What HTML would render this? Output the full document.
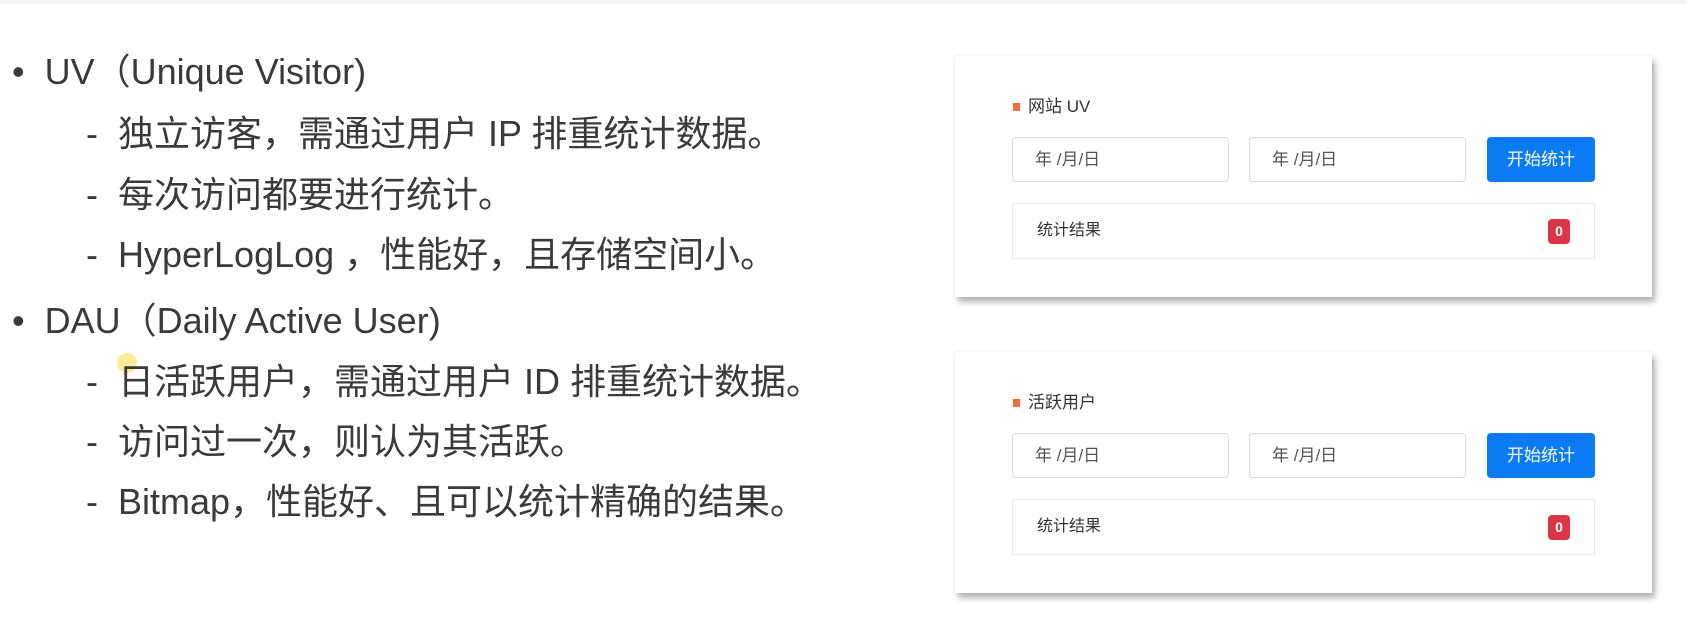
<!DOCTYPE html>
<html><head><meta charset="utf-8"><style>
body{margin:0;width:1687px;height:622px;background:#fff;position:relative;overflow:hidden;font-family:"Liberation Sans","Noto Sans CJK SC",sans-serif;color:#3a3a3a}
.l{position:absolute;font-size:36px;line-height:44px;white-space:nowrap}
.card{position:absolute;left:955px;width:697px;height:241px;background:#fff;box-shadow:3px 5px 6px rgba(0,0,0,.3),0 0 3px rgba(0,0,0,.08)}
.t{position:absolute;left:73px;top:39px;font-size:17px;line-height:24px;color:#333}
.t:before{content:"";position:absolute;left:-15px;top:8px;width:7px;height:8px;background:#f26a3d}
.in{position:absolute;top:81px;width:217px;height:45px;border:1px solid #dcdcdc;border-radius:4px;box-sizing:border-box;font-size:17px;line-height:43px;padding-left:22px;color:#555}
.btn{position:absolute;left:532px;top:81px;width:108px;height:45px;background:#0a7bf5;border-radius:4px;color:#fff;font-size:17px;line-height:45px;text-align:center}
.res{position:absolute;left:57px;top:147px;width:583px;height:56px;border:1px solid #e8e8e8;box-sizing:border-box;font-size:16px;line-height:54px;padding-left:24px;color:#333}
.b{position:absolute;right:24px;top:15px;width:22px;height:25px;background:#dc3545;border-radius:4px;color:#fff;font-size:14px;font-weight:bold;line-height:25px;text-align:center}
</style></head><body>
<div style="position:absolute;left:0;top:0;width:1687px;height:4px;background:#f2f2f2"></div>
<div class="l" style="left:12px;top:50px">•&nbsp; UV（Unique Visitor)</div>
<div class="l" style="left:86px;top:112px">-&nbsp; 独立访客，需通过用户 IP 排重统计数据。</div>
<div class="l" style="left:86px;top:173px">-&nbsp; 每次访问都要进行统计。</div>
<div class="l" style="left:86px;top:233px">-&nbsp; HyperLogLog ，性能好，且存储空间小。</div>
<div class="l" style="left:12px;top:299px">•&nbsp; DAU（Daily Active User)</div>
<div style="position:absolute;left:117px;top:353px;width:20px;height:20px;border-radius:50%;background:#f7e97a;opacity:.8"></div>
<div class="l" style="left:86px;top:360px">-&nbsp; 日活跃用户，需通过用户 ID 排重统计数据。</div>
<div class="l" style="left:86px;top:420px">-&nbsp; 访问过一次，则认为其活跃。</div>
<div class="l" style="left:86px;top:480px">-&nbsp; Bitmap，性能好、且可以统计精确的结果。</div>

<div class="card" style="top:56px">
<div class="t">网站 UV</div>
<div class="in" style="left:57px">年 /月/日</div>
<div class="in" style="left:294px">年 /月/日</div>
<div class="btn">开始统计</div>
<div class="res">统计结果<div class="b">0</div></div>
</div>
<div class="card" style="top:352px">
<div class="t">活跃用户</div>
<div class="in" style="left:57px">年 /月/日</div>
<div class="in" style="left:294px">年 /月/日</div>
<div class="btn">开始统计</div>
<div class="res">统计结果<div class="b">0</div></div>
</div>
</body></html>
